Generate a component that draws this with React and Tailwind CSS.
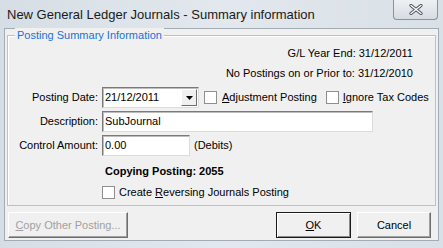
import React from 'react'

const font = { fontFamily: '"Liberation Sans", Arial, sans-serif' }

const Check = ({ className = '' }) => (
  <span className={`inline-block w-[13px] h-[13px] border border-[#8f8f8f] bg-white shrink-0 ${className}`} />
)

const Field = ({ width, value, children }) => (
  <div className={`${width} h-[21px] bg-white border border-t-[#7a7a7a] border-l-[#7a7a7a] border-r-[#dcdcdc] border-b-[#dcdcdc] shadow-[inset_1px_1px_0_#bdbdbd] flex items-center pl-[2px] relative`}>
    <span className="text-[11px] text-black leading-none">{value}</span>
    {children}
  </div>
)

const Label = ({ children }) => (
  <div className="w-[91px] shrink-0 text-right pr-[1px] text-[11px] text-black whitespace-nowrap">{children}</div>
)

export default function App() {
  return (
    <div className="w-[443px] h-[248px] overflow-hidden bg-gradient-to-r from-[#d6dee5] via-[#e2e8ed] to-[#d9e0e6] flex flex-col whitespace-nowrap" style={font}>
      {/* title bar */}
      <div className="h-[28px] flex items-start justify-between shrink-0">
        <div className="pl-[7px] pt-[7px] text-[13px] text-[#1a1a1a] leading-[16px]">
          New General Ledger Journals - Summary information
        </div>
        <div className="mr-[5px] w-[45px] h-[20px] border border-t-0 border-[#8a939c] rounded-b-[4px] bg-gradient-to-b from-[#eef1f4] to-[#d6dce2] flex items-center justify-center">
          <svg width="14" height="11" viewBox="0 0 14 11">
            <path d="M2 1.5 L12 9.5 M12 1.5 L2 9.5" stroke="#4a4f55" strokeWidth="3.2" strokeLinecap="round" />
            <path d="M2 1.5 L12 9.5 M12 1.5 L2 9.5" stroke="#ffffff" strokeWidth="1.4" strokeLinecap="round" />
          </svg>
        </div>
      </div>

      {/* client area */}
      <div className="mx-[4px] h-[213px] bg-[#f0f0f0] border border-[#a3acb5] flex flex-col px-[2px] pt-[6px]">
        {/* group box */}
        <div className="relative h-[171px] border border-[#c0c0c0] shadow-[inset_1px_1px_0_#ffffff] flex flex-col">
          <div className="absolute left-[7px] -top-[8px] px-[2px] bg-[#f0f0f0] text-[11px] text-[#1573e0] leading-[14px]">
            Posting Summary Information
          </div>

          <div className="pt-[7px] pr-[22px] flex flex-col items-end text-[11px] text-black">
            <div className="h-[20px] flex items-center">G/L Year End: 31/12/2011</div>
            <div className="h-[20px] flex items-center">No Postings on or Prior to: 31/12/2010</div>
          </div>

          <div className="mt-[4px] h-[21px] flex items-center">
            <Label>Posting Date:</Label>
            <div className="ml-[3px]">
              <Field width="w-[97px]" value="21/12/2011">
                <div className="absolute right-[1px] top-[1px] w-[16px] h-[17px] bg-[#f0f0f0] border border-t-white border-l-white border-r-[#6d6d6d] border-b-[#6d6d6d] flex items-center justify-center">
                  <svg width="7" height="4" viewBox="0 0 7 4"><path d="M0 0 H7 L3.5 4 Z" fill="#000" /></svg>
                </div>
              </Field>
            </div>
            <Check className="ml-[5px]" />
            <span className="ml-[5px] text-[11px] text-black"><u>A</u>djustment Posting</span>
            <Check className="ml-[9px]" />
            <span className="ml-[4px] text-[11px] text-black"><u>I</u>gnore Tax Codes</span>
          </div>

          <div className="mt-[3px] h-[21px] flex items-center">
            <Label>Description:</Label>
            <div className="ml-[3px]">
              <Field width="w-[271px]" value="SubJournal" />
            </div>
          </div>

          <div className="mt-[3px] h-[21px] flex items-center">
            <Label>Control Amount:</Label>
            <div className="ml-[3px]">
              <Field width="w-[88px]" value="0.00" />
            </div>
            <span className="ml-[4px] text-[11px] text-black">(Debits)</span>
          </div>

          <div className="mt-[6px] h-[18px] flex items-center">
            <div className="w-[97px] shrink-0" />
            <span className="text-[11px] font-bold text-black">Copying Posting: 2055</span>
          </div>

          <div className="mt-[3px] h-[18px] flex items-center">
            <div className="w-[94px] shrink-0" />
            <Check />
            <span className="ml-[4px] text-[11px] text-black">Create <u>R</u>eversing Journals Posting</span>
          </div>
        </div>

        {/* buttons */}
        <div className="mt-[6px] h-[26px] flex items-stretch">
          <div className="w-[120px] ml-[1px] bg-[#f0f0f0] border border-t-white border-l-white border-r-[#6d6d6d] border-b-[#6d6d6d] shadow-[inset_-1px_-1px_0_#a0a0a0] flex items-center justify-center text-[11px] text-[#a0a0a0]">
            <span><u>C</u>opy Other Posting...</span>
          </div>
          <div className="flex-1" />
          <div className="w-[75px] bg-[#f0f0f0] border border-[#1a1a1a] shadow-[inset_1px_1px_0_#ffffff,inset_-1px_-1px_0_#8a8a8a] flex items-center justify-center text-[11px] text-black">
            <span><u>O</u>K</span>
          </div>
          <div className="w-[74px] ml-[6px] mr-[5px] bg-[#f0f0f0] border border-t-white border-l-white border-r-[#6d6d6d] border-b-[#6d6d6d] shadow-[inset_-1px_-1px_0_#a0a0a0] flex items-center justify-center text-[11px] text-black">
            Cancel
          </div>
        </div>
      </div>
    </div>
  )
}
